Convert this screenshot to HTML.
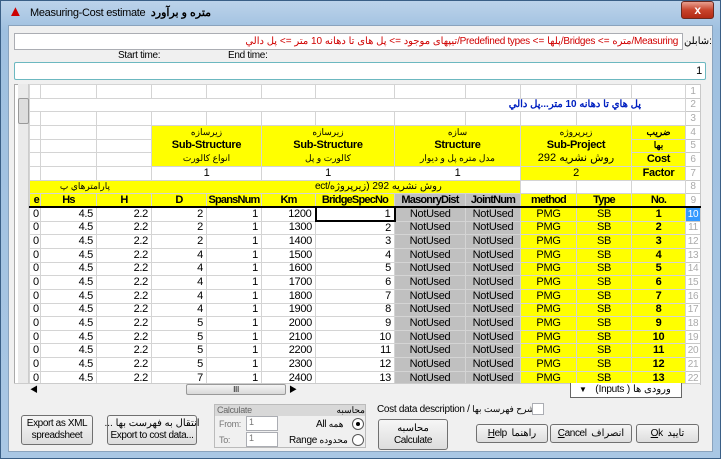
<!DOCTYPE html>
<html><head><meta charset="utf-8"><style>
*{margin:0;padding:0;box-sizing:border-box}
body{width:721px;height:459px;overflow:hidden;background:#6f9fc8;font-family:"Liberation Sans Narrow","Liberation Sans","Noto Sans CJK SC",sans-serif;font-size:11px;letter-spacing:-0.3px;position:relative}
.abs{position:absolute;white-space:nowrap}
#win{left:0;top:0;width:721px;height:459px;background:linear-gradient(#bcd3ea,#9fc0e0 30px,#a9c7e4);border:1px solid #3a5f86}
#client{left:8px;top:25px;width:705px;height:427px;background:#f0f0f0;border:1px solid #8aa3bd}
.ttl{left:30px;top:6px;font-size:11px;color:#000}
#close{left:681px;top:1px;width:33px;height:18px;background:linear-gradient(#e8a090,#c8442c 50%,#b22a14);border:1px solid #6b2a20;border-radius:3px;color:#fff;font-weight:bold;text-align:center;font-size:12px;line-height:16px}
.box{background:#fff;border:1px solid #abadb3}
table{border-collapse:collapse;table-layout:fixed;position:absolute;left:29px;top:84px;width:671px}
td{height:13.67px;border:1px solid #d4d4d4;padding:0 3px;text-align:right;white-space:nowrap;overflow:hidden;font-size:11px;line-height:11px;background:#fff}
td.y{background:#ffff00}
td.g{background:#c0c0c0;text-align:center}
td.c{text-align:center}
td.h{color:#aaa;text-align:center;background:#fff;border-color:#c8c8c8;padding:0;font-size:10px}
td.b{font-weight:bold}
tr.hd td{font-weight:bold;letter-spacing:-0.8px;padding:0 1px}
.btn{position:absolute;background:linear-gradient(#f6f6f6,#dddddd);border:1px solid #707070;border-radius:3px;text-align:center;font-size:10px;line-height:12px;display:flex;flex-direction:column;align-items:center;justify-content:center;white-space:nowrap;letter-spacing:-0.4px}
.btn.r{flex-direction:row}
</style></head><body>
<div id="win" class="abs"></div>
<div class="abs" style="left:8px;top:3px;color:#c00;font-size:15px">&#9650;</div>
<div class="abs ttl">Measuring-Cost estimate &nbsp;<b>متره و برآورد</b></div>
<div id="close" class="abs">x</div>
<div id="client" class="abs"></div>

<div class="abs box" style="left:14px;top:33px;width:669px;height:17px;color:#d00000;font-size:10px;text-align:right;padding-right:4px;line-height:15px;direction:rtl;overflow:hidden">Measuring/متره =&gt; Bridges/پلها =&gt; Predefined types/تیپهای موجود =&gt; پل های تا دهانه 10 متر =&gt; پل دالي</div>
<div class="abs" style="left:684px;top:36px;font-size:10px">شابلن:</div>
<div class="abs" style="left:118px;top:50px;font-size:10px">Start time:</div>
<div class="abs" style="left:228px;top:50px;font-size:10px">End time:</div>
<div class="abs box" style="left:14px;top:62px;width:692px;height:18px;border:1px solid #6cb8c0;border-radius:2px;text-align:right;padding-right:3px;line-height:16px">1</div>

<div class="abs" style="left:14px;top:84px;width:686px;height:312px;background:#fff;border:1px solid #aaa"></div>
<div class="abs" style="left:18px;top:84px;width:11px;height:299px;background:#eaeaea;border-right:1px solid #ccc"></div>
<div class="abs" style="left:18px;top:98px;width:11px;height:26px;background:#ddd;border:1px solid #999;border-radius:2px"></div>

<table>
<colgroup><col style="width:11px"><col style="width:56px"><col style="width:55px"><col style="width:55px"><col style="width:55px"><col style="width:54px"><col style="width:79px"><col style="width:71px"><col style="width:55px"><col style="width:56px"><col style="width:55px"><col style="width:54px"><col style="width:15px"></colgroup>
<tr><td></td><td></td><td></td><td></td><td></td><td></td><td></td><td></td><td></td><td></td><td></td><td></td><td class="h">1</td></tr>
<tr><td colspan="12" style="color:#0020c0;font-weight:bold;font-size:10px;padding-right:44px">پل هاي تا دهانه 10 متر...پل دالي</td><td class="h">2</td></tr>
<tr><td></td><td></td><td></td><td></td><td></td><td></td><td></td><td></td><td></td><td></td><td></td><td></td><td class="h">3</td></tr>
<tr><td></td><td></td><td></td>
<td class="y c" colspan="2" rowspan="3" style="line-height:13px"><span style="font-size:9px">زیرسازه</span><br><b>Sub-Structure</b><br><span style="font-size:9px">انواع کالورت</span></td>
<td class="y c" colspan="2" rowspan="3" style="line-height:13px"><span style="font-size:9px">زیرسازه</span><br><b>Sub-Structure</b><br><span style="font-size:9px">کالورت و پل</span></td>
<td class="y c" colspan="2" rowspan="3" style="line-height:13px"><span style="font-size:9px">سازه</span><br><b>Structure</b><br><span style="font-size:9px">مدل متره پل و دیوار</span></td>
<td class="y c" colspan="2" rowspan="3" style="line-height:13px"><span style="font-size:9px">زیرپروژه</span><br><b>Sub-Project</b><br>روش نشریه 292</td>
<td class="y c b" style="font-size:9px">ضریب</td><td class="h">4</td></tr>
<tr><td></td><td></td><td></td><td class="y c b" style="font-size:9px">بها</td><td class="h">5</td></tr>
<tr><td></td><td></td><td></td><td class="y c b">Cost</td><td class="h">6</td></tr>
<tr><td></td><td></td><td></td><td class="c" colspan="2">1</td><td class="c" colspan="2">1</td><td class="c" colspan="2">1</td><td class="y c" colspan="2">2</td><td class="y c b">Factor</td><td class="h">7</td></tr>
<tr><td class="y" colspan="9" style="font-size:9px;text-align:left;padding:0"><span style="display:inline-block;width:80px;text-align:right">پارامترهاي پ</span><span style="display:inline-block;margin-left:205px;font-size:10px">ect/روش نشریه 292 (زیرپروژه</span></td><td></td><td></td><td></td><td class="h">8</td></tr>
<tr class="hd"><td class="y">e</td><td class="y c">Hs</td><td class="y c">H</td><td class="y c">D</td><td class="y c">SpansNum</td><td class="y c">Km</td><td class="y c">BridgeSpecNo</td><td class="g">MasonryDist</td><td class="g">JointNum</td><td class="y c">method</td><td class="y c">Type</td><td class="y c">No.</td><td class="h" style="border-bottom:1px solid #000;font-weight:normal">9</td></tr>
<tr style="border-top:2px solid #000"><td>0</td><td>4.5</td><td>2.2</td><td>2</td><td>1</td><td>1200</td><td style="border:2px solid #000">1</td><td class="g">NotUsed</td><td class="g">NotUsed</td><td class="y c">PMG</td><td class="y c">SB</td><td class="y c b">1</td><td class="h" style="background:#3399ff;color:#fff">10</td></tr>
<tr><td>0</td><td>4.5</td><td>2.2</td><td>2</td><td>1</td><td>1300</td><td>2</td><td class="g">NotUsed</td><td class="g">NotUsed</td><td class="y c">PMG</td><td class="y c">SB</td><td class="y c b">2</td><td class="h">11</td></tr>
<tr><td>0</td><td>4.5</td><td>2.2</td><td>2</td><td>1</td><td>1400</td><td>3</td><td class="g">NotUsed</td><td class="g">NotUsed</td><td class="y c">PMG</td><td class="y c">SB</td><td class="y c b">3</td><td class="h">12</td></tr>
<tr><td>0</td><td>4.5</td><td>2.2</td><td>4</td><td>1</td><td>1500</td><td>4</td><td class="g">NotUsed</td><td class="g">NotUsed</td><td class="y c">PMG</td><td class="y c">SB</td><td class="y c b">4</td><td class="h">13</td></tr>
<tr><td>0</td><td>4.5</td><td>2.2</td><td>4</td><td>1</td><td>1600</td><td>5</td><td class="g">NotUsed</td><td class="g">NotUsed</td><td class="y c">PMG</td><td class="y c">SB</td><td class="y c b">5</td><td class="h">14</td></tr>
<tr><td>0</td><td>4.5</td><td>2.2</td><td>4</td><td>1</td><td>1700</td><td>6</td><td class="g">NotUsed</td><td class="g">NotUsed</td><td class="y c">PMG</td><td class="y c">SB</td><td class="y c b">6</td><td class="h">15</td></tr>
<tr><td>0</td><td>4.5</td><td>2.2</td><td>4</td><td>1</td><td>1800</td><td>7</td><td class="g">NotUsed</td><td class="g">NotUsed</td><td class="y c">PMG</td><td class="y c">SB</td><td class="y c b">7</td><td class="h">16</td></tr>
<tr><td>0</td><td>4.5</td><td>2.2</td><td>4</td><td>1</td><td>1900</td><td>8</td><td class="g">NotUsed</td><td class="g">NotUsed</td><td class="y c">PMG</td><td class="y c">SB</td><td class="y c b">8</td><td class="h">17</td></tr>
<tr><td>0</td><td>4.5</td><td>2.2</td><td>5</td><td>1</td><td>2000</td><td>9</td><td class="g">NotUsed</td><td class="g">NotUsed</td><td class="y c">PMG</td><td class="y c">SB</td><td class="y c b">9</td><td class="h">18</td></tr>
<tr><td>0</td><td>4.5</td><td>2.2</td><td>5</td><td>1</td><td>2100</td><td>10</td><td class="g">NotUsed</td><td class="g">NotUsed</td><td class="y c">PMG</td><td class="y c">SB</td><td class="y c b">10</td><td class="h">19</td></tr>
<tr><td>0</td><td>4.5</td><td>2.2</td><td>5</td><td>1</td><td>2200</td><td>11</td><td class="g">NotUsed</td><td class="g">NotUsed</td><td class="y c">PMG</td><td class="y c">SB</td><td class="y c b">11</td><td class="h">20</td></tr>
<tr><td>0</td><td>4.5</td><td>2.2</td><td>5</td><td>1</td><td>2300</td><td>12</td><td class="g">NotUsed</td><td class="g">NotUsed</td><td class="y c">PMG</td><td class="y c">SB</td><td class="y c b">12</td><td class="h">21</td></tr>
<tr><td>0</td><td>4.5</td><td>2.2</td><td>7</td><td>1</td><td>2400</td><td>13</td><td class="g">NotUsed</td><td class="g">NotUsed</td><td class="y c">PMG</td><td class="y c">SB</td><td class="y c b">13</td><td class="h">22</td></tr>
</table>

<div class="abs" style="left:14px;top:383px;width:686px;height:13px;background:#f0f0f0;border-top:1px solid #ccc"></div>
<div class="abs" style="left:30px;top:384px;font-size:8px">&#9664;</div>
<div class="abs" style="left:186px;top:384px;width:100px;height:11px;background:linear-gradient(#f4f4f4,#d8d8d8);border:1px solid #999;border-radius:2px;font-size:8px;text-align:center;line-height:9px">III</div>
<div class="abs" style="left:289px;top:384px;font-size:8px">&#9654;</div>
<div class="abs" style="left:570px;top:383px;width:112px;height:15px;background:#fff;border:1px solid #666;border-top:none;font-size:10px;line-height:13px;padding-left:8px;overflow:hidden"><span style="font-size:8px">&#9660;</span> &nbsp;&nbsp;<span dir="rtl">ورودی ها ( Inputs)</span></div>

<div class="btn" style="left:21px;top:415px;width:72px;height:30px">Export as XML<br>spreadsheet</div>
<div class="btn" style="left:107px;top:415px;width:90px;height:30px"><div dir="rtl">انتقال به فهرست بها ...</div><div>Export to cost data...</div></div>
<div class="abs" style="left:214px;top:404px;width:152px;height:44px;border:1px solid #bbb;background:#f0f0f0"></div>
<div class="abs" style="left:215px;top:405px;width:150px;height:11px;background:#d8d8d8;font-size:9px;color:#666;line-height:11px;padding-left:2px">Calculate<span style="float:right;color:#000">محاسبه</span></div>
<div class="abs" style="left:219px;top:419px;font-size:9px;color:#777">From:</div>
<div class="abs box" style="left:246px;top:416px;width:32px;height:15px;font-size:9px;padding-left:2px;color:#777">1</div>
<div class="abs" style="left:219px;top:435px;font-size:9px;color:#777">To:</div>
<div class="abs box" style="left:246px;top:432px;width:32px;height:15px;font-size:9px;padding-left:2px;color:#777">1</div>
<div class="abs" style="left:316px;top:419px;font-size:10px">All <span style="font-size:9px">همه</span></div>
<div class="abs" style="left:352px;top:418px;width:12px;height:12px;border:1px solid #555;border-radius:50%;background:#fff"><div style="width:4px;height:4px;background:#000;border-radius:50%;margin:3px"></div></div>
<div class="abs" style="left:289px;top:435px;font-size:10px">Range <span style="font-size:9px">محدوده</span></div>
<div class="abs" style="left:352px;top:434px;width:12px;height:12px;border:1px solid #555;border-radius:50%;background:#fff"></div>
<div class="abs" style="left:377px;top:404px;font-size:10px">Cost data description / <span style="font-size:9px">شرح فهرست بها</span></div>
<div class="abs box" style="left:532px;top:403px;width:12px;height:12px"></div>
<div class="btn" style="left:378px;top:419px;width:70px;height:31px">محاسبه<br>Calculate</div>
<div class="btn r" style="left:476px;top:424px;width:72px;height:19px"><u>H</u>elp &nbsp;راهنما</div>
<div class="btn r" style="left:550px;top:424px;width:82px;height:19px"><u>C</u>ancel &nbsp;انصراف</div>
<div class="btn r" style="left:636px;top:424px;width:63px;height:19px"><u>O</u>k &nbsp;تایید</div>
</body></html>
